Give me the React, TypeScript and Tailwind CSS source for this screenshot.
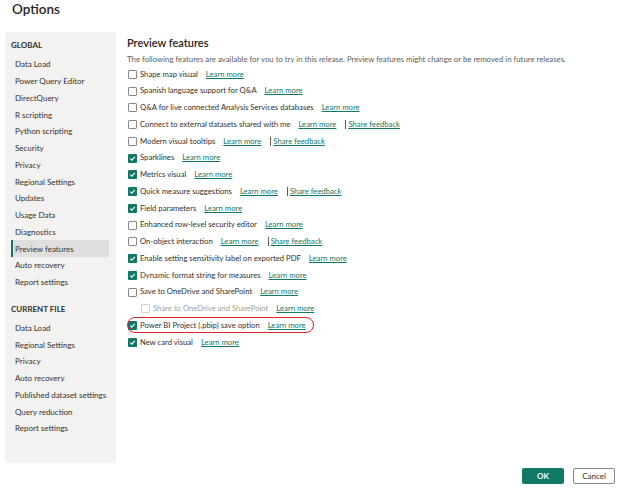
const globalItems = [
  "Data Load",
  "Power Query Editor",
  "DirectQuery",
  "R scripting",
  "Python scripting",
  "Security",
  "Privacy",
  "Regional Settings",
  "Updates",
  "Usage Data",
  "Diagnostics",
  "Preview features",
  "Auto recovery",
  "Report settings",
];

const fileItems = [
  "Data Load",
  "Regional Settings",
  "Privacy",
  "Auto recovery",
  "Published dataset settings",
  "Query reduction",
  "Report settings",
];

type Feature = {
  label: string;
  checked?: boolean;
  feedback?: boolean;
  sub?: boolean;
  highlight?: boolean;
};

const features: Feature[] = [
  { label: "Shape map visual" },
  { label: "Spanish language support for Q&A" },
  { label: "Q&A for live connected Analysis Services databases" },
  { label: "Connect to external datasets shared with me", feedback: true },
  { label: "Modern visual tooltips", feedback: true },
  { label: "Sparklines", checked: true },
  { label: "Metrics visual", checked: true },
  { label: "Quick measure suggestions", checked: true, feedback: true },
  { label: "Field parameters", checked: true },
  { label: "Enhanced row-level security editor" },
  { label: "On-object interaction", feedback: true },
  { label: "Enable setting sensitivity label on exported PDF", checked: true },
  { label: "Dynamic format string for measures", checked: true },
  { label: "Save to OneDrive and SharePoint" },
  { label: "Share to OneDrive and SharePoint", sub: true },
  { label: "Power BI Project (.pbip) save option", checked: true, highlight: true },
  { label: "New card visual", checked: true },
];

function Checkbox({ checked, disabled }: { checked?: boolean; disabled?: boolean }) {
  if (checked) {
    return (
      <span className="w-[9px] h-[9px] rounded-[1px] bg-[#117865] flex items-center justify-center shrink-0">
        <svg width="7" height="7" viewBox="0 0 10 10">
          <path d="M1.8 5.2 L4 7.3 L8.3 2.6" fill="none" stroke="white" strokeWidth="1.6" />
        </svg>
      </span>
    );
  }
  return (
    <span
      className={
        disabled
          ? "w-[9px] h-[9px] rounded-[1px] border border-[#d2d0ce] bg-white shrink-0"
          : "w-[9px] h-[9px] rounded-[1px] border border-[#8a8886] bg-white shrink-0"
      }
    />
  );
}

function FeatureRow({ f }: { f: Feature }) {
  const row = (
    <div className="flex items-center h-[16.75px] whitespace-nowrap text-[7.7px]">
      <Checkbox checked={f.checked} disabled={f.sub} />
      <span className={f.sub ? "ml-[3px] text-[#a19f9d]" : "ml-[3px] text-[#323130]"}>{f.label}</span>
      <span className="ml-[8px] text-[#117865] underline underline-offset-[1px]">Learn more</span>
      {f.feedback && (
        <>
          <span className="ml-[9px] w-px h-[9px] bg-[#605e5c]" />
          <span className="ml-[2px] text-[#117865] underline underline-offset-[1px]">Share feedback</span>
        </>
      )}
    </div>
  );
  if (f.highlight) {
    return (
      <div className="relative">
        {row}
        <div className="absolute left-[-1px] top-[-0.5px] w-[187px] h-[16.5px] rounded-[8px] border-[1.5px] border-[#e0202a]" />
      </div>
    );
  }
  if (f.sub) return <div className="pl-[13px]">{row}</div>;
  return row;
}

function SideItem({ label, active }: { label: string; active?: boolean }) {
  return (
    <div
      className={
        active
          ? "h-[16.75px] flex items-center pl-[2px] border-l-2 border-[#117865] bg-[#e1dfdd] mr-[7px] whitespace-nowrap"
          : "h-[16.75px] flex items-center pl-[4px] mr-[7px] whitespace-nowrap"
      }
    >
      {label}
    </div>
  );
}

export default function App() {
  return (
    <div
      className="w-[624px] h-[492px] bg-white text-[8px] text-[#323130] relative overflow-hidden"
      style={{ fontFamily: 'Lato, "Noto Sans", sans-serif' }}
    >
      <div className="pl-[12px] pt-[1px] h-[32px] text-[13.5px] font-semibold text-[#252423] leading-[17px]">Options</div>
      <div className="flex">
        <div className="ml-[5px] w-[111px] h-[431px] rounded-[3px] bg-[#f3f2f1] pl-[6px] pt-[5px]">
          <div className="h-[16px] flex items-center font-bold text-[8px] text-[#323130]">GLOBAL</div>
          <div className="mt-[3px]">
            {globalItems.map((l) => (
              <SideItem key={l} label={l} active={l === "Preview features"} />
            ))}
          </div>
          <div className="mt-[10px] h-[16px] flex items-center font-bold text-[8px] text-[#323130]">CURRENT FILE</div>
          <div className="mt-[3px]">
            {fileItems.map((l) => (
              <SideItem key={l} label={l} />
            ))}
          </div>
        </div>
        <div className="ml-[11px] flex-1 pt-[3px]">
          <div className="text-[11px] font-semibold text-[#252423] leading-[15px]">Preview features</div>
          <div className="mt-[4px] text-[7.8px] text-[#605e5c] leading-[10px] whitespace-nowrap">
            The following features are available for you to try in this release. Preview features might change or be removed in future releases.
          </div>
          <div className="mt-[2px] ml-[1px]">
            {features.map((f) => (
              <FeatureRow key={f.label} f={f} />
            ))}
          </div>
        </div>
      </div>
      <div className="absolute right-[9px] bottom-[8px] flex gap-[9px]">
        <div className="w-[42px] h-[16px] bg-[#117865] text-white font-bold text-[8px] flex items-center justify-center rounded-[2px]">OK</div>
        <div className="w-[42px] h-[16px] bg-white border border-[#8a8886] text-[#323130] text-[8px] flex items-center justify-center rounded-[2px]">Cancel</div>
      </div>
    </div>
  );
}
